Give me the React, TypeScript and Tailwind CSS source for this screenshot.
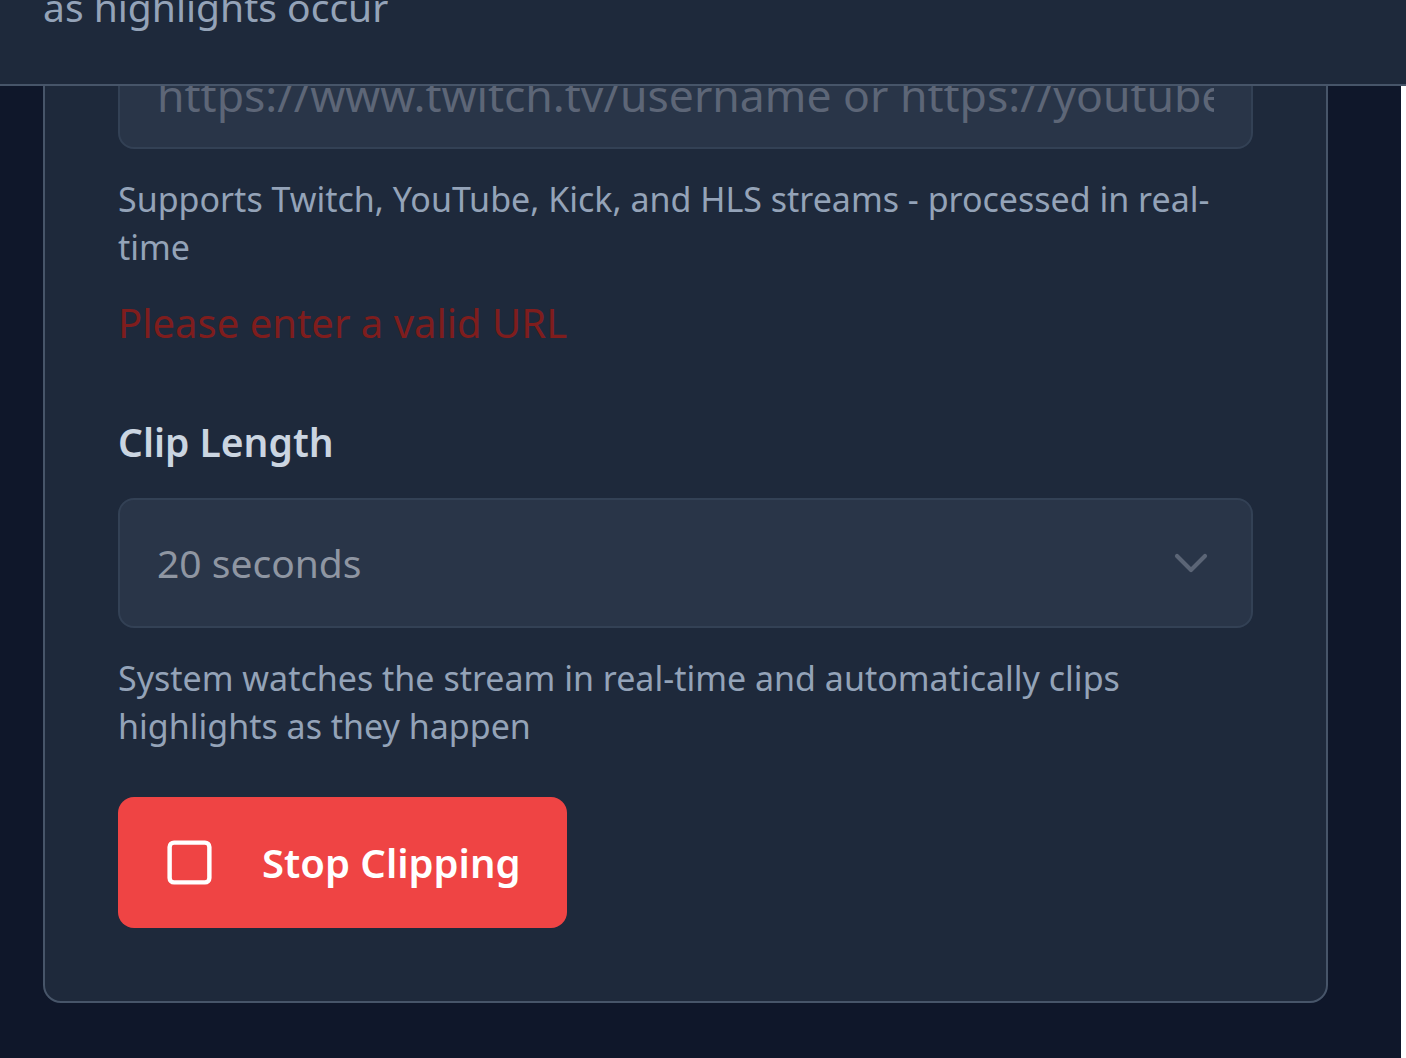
import { ChevronDown, Square } from "lucide-react";

const font = { fontFamily: '"Noto Sans", "Open Sans", sans-serif' };

/**
 * Top bar that stays over the scrolled form.
 */
const Header = () => (
  <header className="fixed inset-x-0 top-0 z-10 h-[86px] overflow-hidden border-b-2 border-[#475569] bg-[#1e293b]">
    <p className="-mt-[23px] pl-[43px] text-[39px] leading-[60px] text-[#94a3b8]">
      as highlights occur
    </p>
  </header>
);

/**
 * Stream clipping form card.
 */
const ClipCard = () => (
  <section className="-mt-[36px] ml-[43px] w-[1285px] rounded-[18px] border-2 border-[#475569] bg-[#1e293b] p-[73px]">
    <input
      type="text"
      placeholder="https://www.twitch.tv/username or https://youtube.com/watch?v=..."
      className="h-[110px] w-full rounded-[16px] border-2 border-[#334155] bg-[#293548] px-[37px] text-[44.5px] text-[#cbd5e1] outline-none placeholder:text-[#5d6677]"
    />
    <p className="mt-[26px] text-[34px] leading-[48px] text-[#94a3b8]">
      Supports Twitch, YouTube, Kick, and HLS streams - processed in real-time
    </p>
    <p className="mt-[22px] text-[40px] leading-[60px] text-[#7f1d1d]">
      Please enter a valid URL
    </p>

    <h2 className="mt-[59px] text-[39px] font-semibold leading-[60px] text-[#cbd5e1]">
      Clip Length
    </h2>
    <button
      type="button"
      className="mt-[26px] flex h-[130px] w-full items-center justify-between rounded-[16px] border-2 border-[#334155] bg-[#293548] pl-[37px] pr-[32px] text-[39px] text-[#8f96a2]"
    >
      <span>20 seconds</span>
      <ChevronDown className="h-[56px] w-[56px] text-[#5b6576]" strokeWidth={1.8} />
    </button>
    <p className="mt-[26px] text-[34px] leading-[48px] text-[#94a3b8]">
      System watches the stream in real-time and automatically clips
      highlights as they happen
    </p>

    <button
      type="button"
      className="mt-[47px] flex h-[131px] items-center gap-[46px] rounded-[16px] bg-[#ef4444] pl-[45px] pr-[47px] text-[40px] font-semibold text-white"
    >
      <Square className="h-[53px] w-[53px]" strokeWidth={2} />
      Stop Clipping
    </button>
  </section>
);

export default function App() {
  return (
    <div className="flex min-h-screen bg-white" style={font}>
      <Header />
      <main className="min-h-[1058px] w-[1401px] overflow-hidden bg-[#0f172a] pb-[60px]">
        <ClipCard />
      </main>
    </div>
  );
}
